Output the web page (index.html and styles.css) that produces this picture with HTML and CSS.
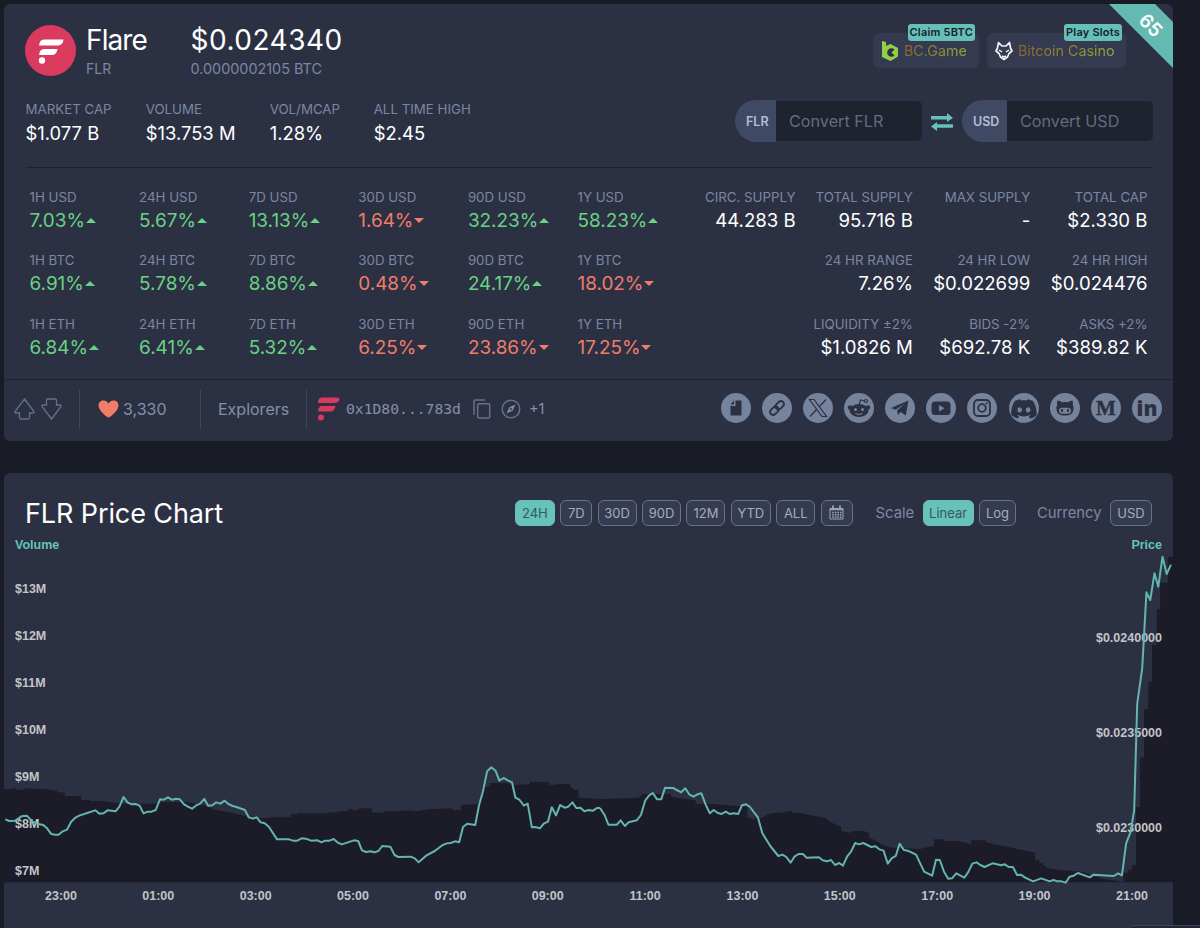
FILE: index.html
```html
<!DOCTYPE html>
<html lang="en">
<head>
    <meta charset="UTF-8">
    <meta name="viewport" content="width=device-width, initial-scale=1.0">
    <title>Flare (FLR) Price</title>
    <link rel="stylesheet" href="styles.css">
</head>
<body>
    <div class="card coin">
        <svg class="ribbon" width="64" height="64" viewBox="0 0 64 64">
            <path d="M0 0H46L64 18V64Z" fill="#65b9b3"/>
            <text x="42" y="28" transform="rotate(45 42 21)" text-anchor="middle">65</text>
        </svg>

        <div class="coin-head">
            <svg class="logo" viewBox="0 0 51 51">
                <circle cx="25.5" cy="25.5" r="25.5" fill="#d93a5e"/>
                <path d="M19 14.5H38.5C38 18.500 36 20.500 32 20.500H14C14.500 16.500 16 14.500 19 14.500ZM19 24H32.500C32 28 30 30 27 30H14C14.500 26 16 24 19 24Z" fill="#fff"/>
                <circle cx="17" cy="35.500" r="3.200" fill="#fff"/>
            </svg>
            <div class="coin-name">
                <div class="big">Flare</div>
                <div class="small">FLR</div>
            </div>
            <div class="coin-price">
                <div class="big">$0.024340</div>
                <div class="small">0.0000002105 BTC</div>
            </div>
            <div class="sponsors">
                <a class="sponsor bc">
                    <svg width="18" height="22" viewBox="0 0 18 22">
                        <path d="M1 1L5 2V6L9.500 4L17 8V16.500L9.500 21L1 17Z" fill="#8fd048"/>
                        <path d="M13.500 9.500A4.300 4.300 0 1 0 13.500 15.500L10.500 12.500Z" fill="#2b3143"/>
                    </svg>
                    <span class="gold">BC.Game</span>
                    <span class="promo">Claim 5BTC</span>
                </a>
                <a class="sponsor casino">
                    <svg width="18" height="20" viewBox="0 0 18 20" fill="none" stroke="#f2f4fa" stroke-width="1.700" stroke-linejoin="round">
                        <path d="M2.500 7L3.500 1.500L7 5H11L14.500 1.500L15.500 7L17 10L14 12.500L12.500 16L9 18.500L5.500 16L4 12.500L1 10Z"/>
                        <path d="M4 9L7 11M14 9L11 11M7 15L9 16L11 15" stroke-width="1.500"/>
                    </svg>
                    <span class="gold">Bitcoin Casino</span>
                    <span class="promo">Play Slots</span>
                </a>
            </div>
        </div>

        <div class="summary">
            <div class="figures">
                <div class="cell"><div class="label">MARKET CAP</div><div class="value">$1.077 B</div></div>
                <div class="cell"><div class="label">VOLUME</div><div class="value">$13.753 M</div></div>
                <div class="cell"><div class="label">VOL/MCAP</div><div class="value">1.28%</div></div>
                <div class="cell"><div class="label">ALL TIME HIGH</div><div class="value">$2.45</div></div>
            </div>
            <div class="converter">
                <label class="tag">FLR</label>
                <input type="text" placeholder="Convert FLR">
                <svg class="swap" width="22" height="18" viewBox="0 0 22 18">
                    <path d="M0 3H16V0L22 5L16 9V6.500H0ZM22 11.200H6V9L0 13.500L6 18V14.700H22Z" fill="#66c2bb"/>
                </svg>
                <label class="tag usd">USD</label>
                <input type="text" placeholder="Convert USD">
            </div>
        </div>

        <div class="stats">
            <div class="changes">
                <div class="cell"><div class="label">1H USD</div><div class="value up">7.03%</div></div>
                <div class="cell"><div class="label">24H USD</div><div class="value up">5.67%</div></div>
                <div class="cell"><div class="label">7D USD</div><div class="value up">13.13%</div></div>
                <div class="cell"><div class="label">30D USD</div><div class="value down">1.64%</div></div>
                <div class="cell"><div class="label">90D USD</div><div class="value up">32.23%</div></div>
                <div class="cell"><div class="label">1Y USD</div><div class="value up">58.23%</div></div>

                <div class="cell"><div class="label">1H BTC</div><div class="value up">6.91%</div></div>
                <div class="cell"><div class="label">24H BTC</div><div class="value up">5.78%</div></div>
                <div class="cell"><div class="label">7D BTC</div><div class="value up">8.86%</div></div>
                <div class="cell"><div class="label">30D BTC</div><div class="value down">0.48%</div></div>
                <div class="cell"><div class="label">90D BTC</div><div class="value up">24.17%</div></div>
                <div class="cell"><div class="label">1Y BTC</div><div class="value down">18.02%</div></div>

                <div class="cell"><div class="label">1H ETH</div><div class="value up">6.84%</div></div>
                <div class="cell"><div class="label">24H ETH</div><div class="value up">6.41%</div></div>
                <div class="cell"><div class="label">7D ETH</div><div class="value up">5.32%</div></div>
                <div class="cell"><div class="label">30D ETH</div><div class="value down">6.25%</div></div>
                <div class="cell"><div class="label">90D ETH</div><div class="value down">23.86%</div></div>
                <div class="cell"><div class="label">1Y ETH</div><div class="value down">17.25%</div></div>
            </div>
            <div class="supply">
                <div class="cell"><div class="label">CIRC. SUPPLY</div><div class="value">44.283 B</div></div>
                <div class="cell"><div class="label">TOTAL SUPPLY</div><div class="value">95.716 B</div></div>
                <div class="cell"><div class="label">MAX SUPPLY</div><div class="value">-</div></div>
                <div class="cell"><div class="label">TOTAL CAP</div><div class="value">$2.330 B</div></div>

                <div class="cell second"><div class="label">24 HR RANGE</div><div class="value">7.26%</div></div>
                <div class="cell"><div class="label">24 HR LOW</div><div class="value">$0.022699</div></div>
                <div class="cell"><div class="label">24 HR HIGH</div><div class="value">$0.024476</div></div>

                <div class="cell second"><div class="label">LIQUIDITY ±2%</div><div class="value">$1.0826 M</div></div>
                <div class="cell"><div class="label">BIDS -2%</div><div class="value">$692.78 K</div></div>
                <div class="cell"><div class="label">ASKS +2%</div><div class="value">$389.82 K</div></div>
            </div>
        </div>

        <div class="coin-foot">
            <div class="foot-item votes">
                <svg width="21" height="22" viewBox="0 0 21 22"><path d="M10.500 1L20 13.500Q20.500 15 19 15H15.500V19.500Q15.500 21 14.500 21H6.500Q5.500 21 5.500 19.500V15H2Q.500 15 1 13.500Z"/></svg>
                <svg width="21" height="22" viewBox="0 0 21 22"><path d="M10.500 21L20 8.500Q20.500 7 19 7H15.500V2.500Q15.500 1 14.500 1H6.500Q5.500 1 5.500 2.500V7H2Q.500 7 1 8.500Z"/></svg>
            </div>
            <div class="foot-item likes">
                <svg width="21" height="18" viewBox="0 0 21 18"><path d="M10.500 17.500C9.500 17.500 .500 11 .500 5.500C.500 2.500 2.500 .500 5.500 .500C8 .500 9.500 2 10.500 3.500C11.500 2 13 .500 15.500 .500C18.500 .500 20.500 2.500 20.500 5.500C20.500 11 11.500 17.500 10.500 17.500Z" fill="#f17c67"/></svg>
                <span>3,330</span>
            </div>
            <div class="foot-item explorers">Explorers</div>
            <div class="foot-item contract">
                <svg width="24" height="24" viewBox="0 0 24 24" fill="#d93a5e">
                    <path d="M5 .500H20Q24 1.500 22 4Q20.500 6 17 6H1Q.500 1 5 .500ZM5 9H18.500Q17.500 14.500 13 14.500H1Q1 9 5 9Z"/>
                    <circle cx="4" cy="20.500" r="3"/>
                </svg>
                <span class="hash">0x1D80...783d</span>
                <svg class="copy" width="18" height="20" viewBox="0 0 18 20" fill="none" stroke="#66708a" stroke-width="1.500">
                    <path d="M1 16V2Q1 1 2 1H12"/>
                    <rect x="4.700" y="4.700" width="12" height="14.300" rx="1"/>
                </svg>
                <svg width="20" height="20" viewBox="0 0 20 20">
                    <circle cx="10" cy="10" r="8.800" fill="none" stroke="#66708a" stroke-width="1.500"/>
                    <path fill-rule="evenodd" d="M14.500 5.500L11.700 11.700L5.500 14.500L8.300 8.300ZM10 9A1 1 0 1 0 10 11A1 1 0 1 0 10 9Z" fill="#7e8aa5"/>
                </svg>
                <span class="more">+1</span>
            </div>

            <div class="socials">
                <svg viewBox="0 0 30 30"><circle cx="15" cy="15" r="15"/><path class="ink" d="M14.500 7.500H20.500V22.500H9.500V13H14.500ZM13 7.500V11.500H9.500Z"/></svg>
                <svg viewBox="0 0 30 30"><circle cx="15" cy="15" r="15"/><g class="line" transform="rotate(-45 15 15)"><rect x="6.500" y="12" width="9.500" height="6" rx="3"/><rect x="14" y="12" width="9.500" height="6" rx="3"/></g></svg>
                <svg viewBox="0 0 30 30"><circle cx="15" cy="15" r="15"/><g class="line thin"><path d="M6.500 6.500H11L23.500 23.500H19ZM23 6.500L16 14M13.500 16.500L7 23.500"/></g></svg>
                <svg viewBox="0 0 30 30"><circle cx="15" cy="15" r="15"/><ellipse class="ink" cx="15" cy="17.500" rx="9.500" ry="6.500"/><circle class="ink" cx="6" cy="14.500" r="2.200"/><circle class="ink" cx="24" cy="14.500" r="2.200"/><g class="line thin"><path d="M15 12L16.500 7L20.500 8"/><circle cx="22" cy="8" r="1.500"/></g><circle cx="11.500" cy="16.500" r="1.500"/><circle cx="18.500" cy="16.500" r="1.500"/><path class="smile" d="M11.500 20.500Q15 22.500 18.500 20.500"/></svg>
                <svg viewBox="0 0 30 30"><circle cx="15" cy="15" r="15"/><path class="ink" d="M6 15L23.500 7.500L20.800 22.500L15.500 19L13 22L12 17.500L20 10.500L10.500 16.800Z"/></svg>
                <svg viewBox="0 0 30 30"><circle cx="15" cy="15" r="15"/><rect class="ink" x="5.500" y="8.500" width="19" height="13.500" rx="3.500"/><path d="M13 12V18.500L18.500 15.200Z"/></svg>
                <svg viewBox="0 0 30 30"><circle cx="15" cy="15" r="15"/><g class="line"><rect x="7" y="7" width="16" height="16" rx="4"/><circle cx="15" cy="15" r="3.800"/></g><circle class="ink" cx="19.700" cy="10.300" r="1.100"/></svg>
                <svg viewBox="0 0 30 30"><circle cx="15" cy="15" r="15"/><path class="ink" transform="translate(2.200 3.200) scale(1.060)" d="M20.317 4.370a19.800 19.800 0 00-4.885-1.515c-.290.411-.523.900-.687 1.287-1.845-.276-3.680-.276-5.487 0-.164-.393-.406-.874-.618-1.287a19.700 19.700 0 00-4.963 1.515C.533 9.046-.319 13.580.099 18.058c2.084 1.564 4.072 2.479 6.024 3.086.546-.658.957-1.323 1.310-2.022-.694-.354-1.316-.655-1.913-.998l.364-.419c4.005 1.783 8.257 1.783 12.139 0l.451.302a12.300 12.300 0 01-1.880 1.019c.320.805.731 1.469 1.184 2.100 2.046-.578 4.034-1.493 6.087-3.001.532-5.232-.807-9.729-3.548-13.755zM8.020 15.331c-1.183 0-2.157-1.086-2.157-2.419s.956-2.419 2.157-2.419 2.176 1.095 2.157 2.419c0 1.333-.956 2.419-2.157 2.419zm7.975 0c-1.183 0-2.157-1.086-2.157-2.419s.955-2.419 2.157-2.419 2.176 1.095 2.157 2.419c0 1.333-.946 2.419-2.157 2.419z"/></svg>
                <svg viewBox="0 0 30 30"><circle cx="15" cy="15" r="15"/><path class="ink" d="M7.500 7.500Q10 7.500 12 9.300Q15 8.700 18 9.300Q20 7.500 22.500 7.500Q23.300 9.500 22.700 11.500Q24 13.500 23.500 16.500C23 21 20 22.500 15 22.500S7 21 6.500 16.500Q6 13.500 7.300 11.500Q6.700 9.500 7.500 7.500Z"/><rect x="9" y="14.700" width="12" height="6" rx="3"/><ellipse class="ink" cx="12" cy="17.500" rx="1.100" ry="1.700"/><ellipse class="ink" cx="18" cy="17.500" rx="1.100" ry="1.700"/></svg>
                <svg viewBox="0 0 30 30"><circle cx="15" cy="15" r="15"/><text class="ink medium" x="15" y="22">M</text></svg>
                <svg viewBox="0 0 30 30"><circle cx="15" cy="15" r="15"/><text class="ink linkedin" x="15" y="22.500">in</text></svg>
            </div>
        </div>
    </div>

    <div class="card chart-card">
        <div class="chart-head">
            <h2>FLR Price Chart</h2>
            <div class="buttons range">
                <button class="active w40">24H</button>
                <button class="w32">7D</button>
                <button>30D</button>
                <button>90D</button>
                <button>12M</button>
                <button class="w40">YTD</button>
                <button>ALL</button>
                <button class="w32">
                    <svg width="15" height="15" viewBox="0 0 15 15">
                        <path fill="none" stroke="#9da4b8" d="M1 3.500H14V14H1Z"/>
                        <path stroke="#9da4b8" stroke-width="1.800" d="M4 .500V4M11 .500V4M1 4.300H14"/>
                        <path stroke="#9da4b8" stroke-width="1.400" stroke-dasharray="1.600 1" d="M3.200 7.500H12.500M3.200 9.800H12.500M3.200 12H12.500"/>
                    </svg>
                </button>
            </div>
            <span class="caption scale">Scale</span>
            <div class="buttons">
                <button class="active w51">Linear</button>
                <button class="w37">Log</button>
            </div>
            <span class="caption currency">Currency</span>
            <div class="buttons">
                <button class="w42">USD</button>
            </div>
        </div>

        <svg class="chart" width="1169" height="398" viewBox="4 530 1169 398">
            <g class="volume">
                <path transform="translate(0 730) scale(.38265 .33333)" d="M10 177H30V174H41V179H63V175H80V177H124V179H137V182H150V187H165V190H170V198H212V210H235V213H268L290 217L320 221H410L420 216H480L500 218L520 222L540 228L560 239L600 246L640 258L661 264H700L715 262H760V252H778V248L800 250H860V247H883V244H909V238H924V242L945 235H971V247L985 249L1005 247V243H1045L1060 241L1085 244L1118 238L1183 235V240H1205V224L1245 222L1252 215L1264 190V170H1280V159H1325L1340 165L1384 163V156H1398V154L1410 156H1435V164H1458V162H1490V170L1502 180H1512V203L1570 207V457H10Z"/>
                <path transform="translate(600 730) scale(.38265 .33333)" d="M0 207L100 203L112 192H185L187 201L212 205L250 211V222H295L330 226L385 230V262L400 267L425 262L440 253L455 249L480 247L490 244H502V249H525L545 254L565 259L590 264L600 275L630 290V303L652 308L665 303H690L703 310V322L717 330L735 342L755 352L770 354L835 357L855 352L873 348V328H898V334L930 333L950 337L970 343V331H1008L1010 337L1040 345L1070 352L1100 359L1137 368V390H1148V398H1158V405L1170 415L1200 420L1260 425L1290 438L1320 448L1350 452L1368 456V428H1380V419H1391V405H1401V232H1411V83H1422V-62H1433V-145H1443V-255H1455V-362H1464V-442H1484V-520H1499V457H0Z"/>
            </g>

            <g class="axis">
                <text x="15" y="593">$13M</text>
                <text x="15" y="640">$12M</text>
                <text x="15" y="687">$11M</text>
                <text x="15" y="734">$10M</text>
                <text x="15" y="781">$9M</text>
                <text x="15" y="828">$8M</text>
                <text x="15" y="875">$7M</text>
            </g>
            <g class="axis end">
                <text x="1162" y="642">$0.0240000</text>
                <text x="1162" y="737">$0.0235000</text>
                <text x="1162" y="832">$0.0230000</text>
            </g>
            <g class="axis middle">
                <text x="61" y="900">23:00</text>
                <text x="158.300" y="900">01:00</text>
                <text x="255.700" y="900">03:00</text>
                <text x="353" y="900">05:00</text>
                <text x="450.400" y="900">07:00</text>
                <text x="547.700" y="900">09:00</text>
                <text x="645.100" y="900">11:00</text>
                <text x="742.500" y="900">13:00</text>
                <text x="839.800" y="900">15:00</text>
                <text x="937.200" y="900">17:00</text>
                <text x="1034.600" y="900">19:00</text>
                <text x="1132" y="900">21:00</text>
            </g>
            <text class="axis-title" x="15" y="549">Volume</text>
            <text class="axis-title end" x="1162" y="549">Price</text>

            <g class="price">
                <polyline transform="translate(0 730) scale(.38265 .33333)" points="14,268 24,273 40,272 56,259 70,257 85,275 100,282 113,285 123,295 133,311 143,314 153,314 164,304 175,299 186,275 196,264 207,257 228,249 249,241 260,251 270,250 281,241 302,244 312,230 323,201 333,217 344,223 354,222 365,227 375,250 386,245 396,245 407,240 418,208 428,209 439,202 449,209 460,206 470,208 481,223 491,230 502,236 513,226 523,221 534,207 544,227 555,226 565,217 576,221 587,212 597,222 608,228 618,231 640,240 650,262 661,266 671,262 681,277 692,280 703,291 724,328 755,328 766,332 777,332 788,325 799,326 813,332 830,331 840,337 850,332 861,332 872,327 883,338 893,343 925,331 936,333 946,361 957,366 968,364 978,367 989,363 999,348 1020,350 1031,375 1041,381 1073,380 1084,385 1094,397 1115,376 1136,363 1157,345 1168,340 1178,339 1189,334 1200,337 1210,291 1221,281 1242,285 1252,225 1262,185 1273,124 1284,112 1295,122 1305,152 1316,144 1327,151 1338,157 1347,203 1358,210 1369,227 1379,221 1390,292 1400,291 1411,295 1421,281 1432,275 1442,232 1453,256 1464,225 1475,233 1485,230 1496,217 1506,234 1517,233 1527,244 1538,240 1550,242 1560,234 1568,234"/>
                <polyline transform="translate(600 730) scale(.38265 .33333)" points="0,234 12,255 22,284 44,284 54,271 65,288 75,277 96,271 107,255 118,212 128,197 138,189 149,208 160,208 170,173 191,174 212,187 223,175 233,193 244,200 255,193 265,190 276,223 287,250 297,240 308,249 318,252 329,245 339,252 350,250 361,252 371,226 382,223 392,231 413,263 424,309 434,328 445,348 466,378 477,374 487,381 498,398 508,380 519,372 530,372 540,383 572,382 582,391 593,394 604,390 614,405 625,399 635,407 646,379 656,365 667,339 677,343 688,339 709,351 720,349 730,358 741,362 752,401 762,385 773,378 783,341 794,360 804,362 826,374 847,425 868,437 878,389 888,390 899,425 910,446 920,445 931,430 952,443 962,427 973,401 984,397 994,405 1005,411 1026,400 1048,406 1058,403 1068,411 1079,411 1090,435 1100,434 1111,443 1132,454 1153,445 1175,454 1185,450 1195,454 1206,454 1217,458 1227,440 1238,437 1249,429 1280,442 1290,434 1343,438 1354,430 1364,436 1375,340 1387,305 1396,240 1404,-80 1417,-185 1428,-413 1438,-390 1449,-470 1459,-430 1470,-520 1481,-468 1492,-496"/>
            </g>
        </svg>
    </div>

    <div class="dock"></div>
</body>
</html>
```
FILE: styles.css
```css
* {
    box-sizing: border-box;
}

body {
    margin: 0;
    padding: 4px 27px 0 4px;
    height: 928px;
    overflow: hidden;
    background-color: #191b26;
    color: #fff;
    font-family: Inter, "Liberation Sans", sans-serif;
}

svg {
    display: block;
    flex: none;
}

.card {
    position: relative;
    width: 1169px;
    background-color: #2b3143;
    border-radius: 6px;
    overflow: hidden;
}

.coin {
    height: 437px;
}

.ribbon {
    position: absolute; /* lies over the corner */
    top: 0;
    right: 0;
}

.ribbon text {
    font-size: 19px;
    font-weight: 600;
    fill: #fff;
}

/* Header */
.coin-head {
    display: flex;
    height: 95px;
    padding: 20px 47px 0 21px;
}

.logo {
    width: 51px;
    height: 51px;
    margin-top: 1px;
}

.coin-name {
    width: 104.500px;
    margin-left: 10px;
}

.big {
    font-size: 28px;
    line-height: 33px;
    letter-spacing: -0.9px;
}

.coin-price .big {
    letter-spacing: 0.5px;
}

.small {
    margin-top: 3px;
    font-size: 14px;
    line-height: 17px;
    color: #7c86a1;
}

.coin-price .small {
    font-size: 14.400px;
}

.sponsors {
    display: flex;
    gap: 8px;
    margin-left: auto;
    margin-top: 9px;
}

.sponsor {
    position: relative;
    display: flex;
    align-items: center;
    gap: 5px;
    height: 35px;
    padding: 0 8px;
    border-radius: 6px;
    background-color: #343b50;
    font-size: 14.300px;
}

.bc {
    width: 106px;
}

.casino {
    width: 139px;
}

.gold {
    background: linear-gradient(90deg, #8d6330, #98a83d);
    -webkit-background-clip: text;
    background-clip: text;
    color: transparent;
    white-space: nowrap;
}

.promo {
    position: absolute; /* badge over the top edge */
    top: -9px;
    right: 4px;
    padding: 0 2px;
    border-radius: 3px;
    background-color: #66bfb9;
    color: #14242c;
    font-size: 11px;
    font-weight: 600;
    letter-spacing: 0.2px;
    line-height: 17px;
    white-space: nowrap;
}

/* Market figures and converter */
.summary {
    display: flex;
    height: 69px;
    margin: 0 20px 0 21.500px;
    border-bottom: 1px solid #1c202d;
}

.figures {
    display: grid;
    grid-template-columns: 120.200px 124px 104px 120px;
}

.label {
    font-size: 13.300px;
    line-height: 19px;
    color: #7c86a1;
    white-space: nowrap;
}

.value {
    font-size: 18.900px;
    line-height: 27px;
    white-space: nowrap;
}

.supply .value {
    font-size: 18.600px;
}

.figures .label {
    line-height: 20px;
}

.figures .value {
    font-size: 18.400px;
    line-height: 29px;
}

.converter {
    display: flex;
    align-items: center;
    height: 42px;
    margin-left: auto;
    margin-top: 1px;
}

.tag {
    width: 41px;
    height: 42px;
    padding-left: 11px;
    border-radius: 21px 0 0 21px;
    background-color: #404963;
    color: #b4bdd6;
    font-size: 12.500px;
    font-weight: 600;
    line-height: 43px;
}

.tag.usd {
    width: 45px;
}

.converter input {
    width: 146px;
    height: 40px;
    padding: 0 13px;
    border: none;
    border-radius: 0 5px 5px 0;
    background-color: #1f222f;
    font-family: inherit;
    font-size: 16.200px;
}

.converter input::placeholder {
    color: #626c80;
    opacity: 1;
}

.swap {
    margin: 2px 9px 0;
}

/* Stats */
.stats {
    display: flex;
    justify-content: space-between;
    height: 212px;
    padding: 19.500px 25.500px 0 25.500px;
    border-bottom: 1px solid #1f2331;
}

.changes {
    display: grid;
    grid-template-columns: repeat(6, 109.600px);
    row-gap: 17.500px;
    align-content: start;
}

.supply {
    display: grid;
    grid-template-columns: repeat(4, 117.300px);
    row-gap: 17.500px;
    align-content: start;
    text-align: right;
    margin-left: -10px;
}

.supply .second {
    grid-column: 2;
}

.up {
    color: #69d283;
}

.down {
    color: #ef7d6b;
}

.up::after,
.down::after {
    content: "";
    display: inline-block;
    margin-left: 1px;
    vertical-align: 4px;
    border-left: 5px solid transparent;
    border-right: 5px solid transparent;
}

.up::after {
    border-bottom: 5px solid #69d283;
}

.down::after {
    border-top: 5px solid #ef7d6b;
}

/* Footer */
.coin-foot {
    display: flex;
    align-items: center;
    height: 59px;
    color: #8590ab;
    font-size: 16px;
}

.foot-item {
    display: flex;
    align-items: center;
    height: 39px;
    padding-bottom: 2px;
    border-left: 1px solid #40475b;
}

.votes {
    gap: 6px;
    width: 75px;
    padding-left: 10px;
    border-left: none;
}

.votes path {
    fill: none;
    stroke: #65708a;
    stroke-width: 1.300;
}

.likes {
    gap: 4px;
    width: 121px;
    padding-left: 18px;
}

.explorers {
    width: 106px;
    padding-left: 17px;
}

.contract {
    padding-left: 10px;
}

.hash {
    margin: 0 12px 0 5px;
    font-family: "DejaVu Sans Mono", monospace;
    font-size: 14.700px;
}

.copy {
    margin-right: 10px;
}

.more {
    margin-left: 8px;
    font-size: 14.500px;
}

.socials {
    display: flex;
    gap: 11.150px;
    margin-left: auto;
    margin-right: 11px;
    padding-bottom: 3px;
}

.socials svg {
    width: 30px;
    height: 30px;
    fill: #76839c;
}

.socials .ink {
    fill: #2b3143;
}

.socials .line {
    fill: none;
    stroke: #2b3143;
    stroke-width: 1.800;
}

.socials .thin {
    stroke-width: 1.200;
}

.socials .smile {
    fill: none;
    stroke: #76839c;
}

.medium,
.linkedin {
    font-weight: bold;
    text-anchor: middle;
}

.medium {
    font-family: "Liberation Serif", serif;
    font-size: 21px;
    stroke: #2b3143;
    stroke-width: 0.400;
}

.linkedin {
    font-family: "Open Sans", sans-serif;
    font-size: 21px;
    font-weight: 800;
}

/* Chart */
.chart-card {
    height: 460px;
    margin-top: 32px;
}

.chart-head {
    display: flex;
    align-items: center;
    height: 57px;
    padding: 22px 21px 0 21px;
}

h2 {
    margin: 2px 0 0;
    font-size: 27px;
    font-weight: 400;
    letter-spacing: -0.1px;
    white-space: nowrap;
}

.buttons {
    display: flex;
    gap: 5.400px;
}

.range {
    margin-left: auto;
}

button {
    display: flex;
    align-items: center;
    justify-content: center;
    width: 39px;
    height: 26px;
    padding: 0;
    border: 1px solid #69728a;
    border-radius: 6px;
    background-color: #353c52;
    color: #a5abbd;
    font-family: inherit;
    font-size: 13px;
}

button.active {
    border-color: #66c2bb;
    background-color: #66c2bb;
    color: #355763;
}

.w32 {
    width: 32px;
}

.w37 {
    width: 37px;
}

.w40 {
    width: 40px;
}

.w42 {
    width: 42px;
}

.w51 {
    width: 51px;
}

.caption {
    margin-top: 1px;
    color: #7f89a3;
    font-size: 14.800px;
}

.scale {
    width: 70px;
    padding-left: 23px;
}

.currency {
    width: 94px;
    padding-left: 21px;
}

.chart text {
    font-family: "Liberation Sans", sans-serif;
    font-size: 12.500px;
    font-weight: bold;
}

.volume path {
    fill: #1b1c27;
}

.axis text {
    fill: #c3c4c9;
}

.chart .axis-title {
    fill: #66c2bb;
}

.chart .end {
    text-anchor: end;
}

.chart .middle {
    text-anchor: middle;
}

.price polyline {
    fill: none;
    stroke: #63b5ae;
    stroke-width: 2;
    stroke-linejoin: round;
    vector-effect: non-scaling-stroke;
}

/* Collapsed panel peeking in at the bottom right */
.dock {
    position: fixed;
    left: 1128px;
    top: 925px;
    width: 90px;
    height: 20px;
    border: 1px solid #3f465b;
    border-radius: 6px;
    background-color: #222636;
}
```
